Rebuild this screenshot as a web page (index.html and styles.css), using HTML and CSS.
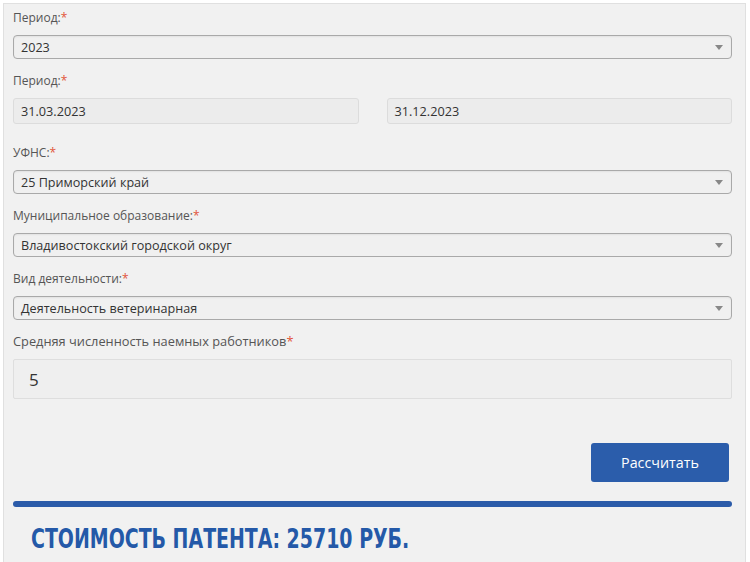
FILE: index.html
```html
<!DOCTYPE html>
<html lang="ru">
<head>
<meta charset="utf-8">
<title>Калькулятор патента</title>
<link rel="stylesheet" href="styles.css">
</head>
<body>
<div class="panel">
  <div class="field">
    <div class="label">Период:<span class="req">*</span></div>
    <div class="select"><span class="value">2023</span><span class="arrow"></span></div>
  </div>
  <div class="field field-wide">
    <div class="label">Период:<span class="req">*</span></div>
    <div class="dates">
      <div class="input">31.03.2023</div>
      <div class="input">31.12.2023</div>
    </div>
  </div>
  <div class="field">
    <div class="label">УФНС:<span class="req">*</span></div>
    <div class="select"><span class="value">25 Приморский край</span><span class="arrow"></span></div>
  </div>
  <div class="field">
    <div class="label">Муниципальное образование:<span class="req">*</span></div>
    <div class="select"><span class="value">Владивостокский городской округ</span><span class="arrow"></span></div>
  </div>
  <div class="field">
    <div class="label">Вид деятельности:<span class="req">*</span></div>
    <div class="select"><span class="value">Деятельность ветеринарная</span><span class="arrow"></span></div>
  </div>
  <div class="field">
    <div class="label label-lg">Средняя численность наемных работников<span class="req">*</span></div>
    <div class="number">5</div>
  </div>
  <div class="actions">
    <button class="btn" type="button">Рассчитать</button>
  </div>
  <div class="bar"></div>
  <div class="result"><span class="result-text">СТОИМОСТЬ ПАТЕНТА: 25710 РУБ.</span></div>
</div>
</body>
</html>
```
FILE: styles.css
```css
html, body {
  margin: 0;
  padding: 0;
  background: #ffffff;
}
body {
  font-family: "Open Sans", "Noto Sans", sans-serif;
  color: #333;
}
.panel {
  margin: 3px 4px 0 3px;
  min-height: 559px;
  box-sizing: border-box;
  background: #f1f1f1;
  border: 1px solid #e0e0e0;
  border-bottom: none;
  padding: 5px 13px 0 9px;
}
.field {
  margin-bottom: 13px;
}
.field-wide {
  margin-bottom: 20px;
}
.label {
  font-size: 12px;
  line-height: 17px;
  color: #555;
  margin-bottom: 9px;
}
.label-lg {
  font-size: 12.8px;
}
.req {
  color: #e2553a;
}
.select {
  height: 24px;
  box-sizing: border-box;
  border: 1px solid #a9a9a9;
  border-radius: 4px;
  background: #f0f0f0;
  box-shadow: inset 0 1px 2px rgba(0,0,0,0.06);
  display: flex;
  align-items: center;
  padding: 0 7px;
  font-size: 12.6px;
  color: #333;
}
.select .value {
  flex: 1;
}
.arrow {
  width: 0;
  height: 0;
  border-left: 4px solid transparent;
  border-right: 4px solid transparent;
  border-top: 5px solid #888;
  margin-right: 1px;
}
.dates {
  display: grid;
  grid-template-columns: 1fr 1fr;
  column-gap: 28px;
}
.input {
  height: 26px;
  box-sizing: border-box;
  border: 1px solid #dcdcdc;
  border-radius: 3px;
  background: #ececec;
  display: flex;
  align-items: center;
  padding: 0 7px;
  font-size: 12.7px;
  color: #333;
}
.number {
  height: 40px;
  box-sizing: border-box;
  border: 1px solid #dedede;
  border-radius: 2px;
  background: #efefef;
  display: flex;
  align-items: center;
  padding: 0 15px;
  font-size: 17px;
  color: #333;
}
.actions {
  display: flex;
  justify-content: flex-end;
  padding-top: 31px;
  padding-right: 3px;
  margin-bottom: 19px;
}
.btn {
  width: 138px;
  height: 39px;
  border: none;
  border-radius: 3px;
  background: #2b5dab;
  color: #fff;
  font-family: "Open Sans", "Noto Sans", sans-serif;
  font-size: 14.3px;
  cursor: pointer;
}
.bar {
  height: 6px;
  background: #2b5ba9;
  border-radius: 3px;
}
.result {
  margin-top: 17px;
  padding-left: 18px;
  font-family: "DejaVu Sans Condensed", "DejaVu Sans", sans-serif;
  font-weight: bold;
  font-size: 27px;
  line-height: 30px;
  color: #2459a8;
  white-space: nowrap;
}
.result-text {
  display: inline-block;
  transform: scaleX(0.78);
  transform-origin: left center;
}
```
